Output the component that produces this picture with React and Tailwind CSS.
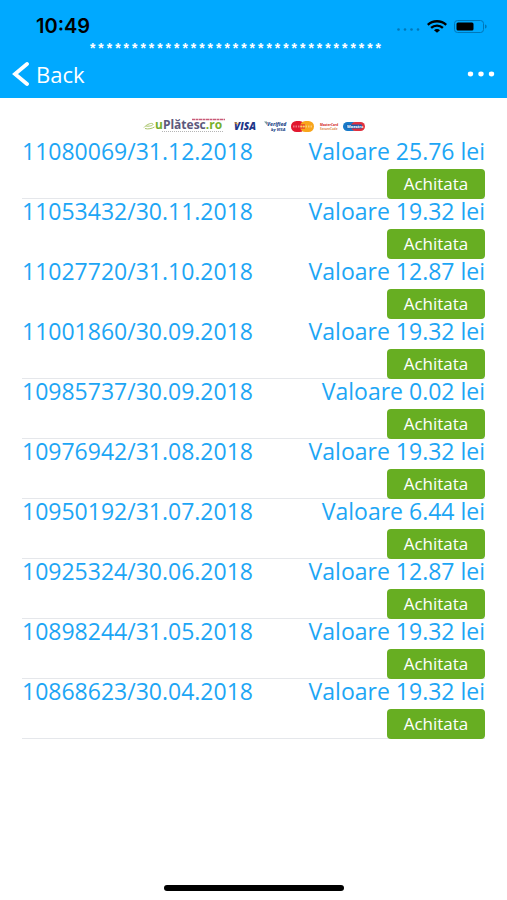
import { useState } from "react";

const INVOICES = [
  { number: "11080069", date: "31.12.2018", value: "25.76", line: true },
  { number: "11053432", date: "30.11.2018", value: "19.32", line: false },
  { number: "11027720", date: "31.10.2018", value: "12.87", line: false },
  { number: "11001860", date: "30.09.2018", value: "19.32", line: true },
  { number: "10985737", date: "30.09.2018", value: "0.02", line: true },
  { number: "10976942", date: "31.08.2018", value: "19.32", line: true },
  { number: "10950192", date: "31.07.2018", value: "6.44", line: true },
  { number: "10925324", date: "30.06.2018", value: "12.87", line: true },
  { number: "10898244", date: "31.05.2018", value: "19.32", line: true },
  { number: "10868623", date: "30.04.2018", value: "19.32", line: true },
];

function StatusBar() {
  return (
    <div className="flex h-10 items-end justify-between pr-5 pl-9 text-black">
      <span className="font-['Inter',sans-serif] text-xl leading-7 font-semibold">10:49</span>
      <div className="flex h-7 items-center gap-[7px]">
        <svg width="23" height="12" viewBox="0 0 23 12" fill="#0077b8">
          <circle cx="1.5" cy="9.5" r="1.3" />
          <circle cx="8" cy="9.5" r="1.3" />
          <circle cx="14.5" cy="9.5" r="1.3" />
          <circle cx="21" cy="9.5" r="1.3" />
        </svg>
        <svg width="20" height="13" viewBox="0 0 20 13" fill="none" stroke="#000" strokeWidth="2.4">
          <path d="M0.8 4.8C5.8 0.1 14.2 0.1 19.2 4.8" />
          <path d="M4.1 7.9C7.4 4.9 12.6 4.9 15.9 7.9" />
          <path d="M7 10.2C8.6 8.7 11.4 8.7 13 10.2L10 12.8Z" fill="#000" stroke="none" />
        </svg>
        <svg width="33" height="13" viewBox="0 0 33 13">
          <rect x="0.5" y="0.5" width="29" height="12" rx="3" fill="none" stroke="#0077b8" />
          <rect x="2.5" y="2.5" width="17" height="8" rx="1.5" fill="#000" />
          <path d="M31 4.5C33.2 5 33.2 8 31 8.5Z" fill="#0077b8" />
        </svg>
      </div>
    </div>
  );
}

function PaymentLogos() {
  return (
    <div className="flex h-[41px] items-end justify-center pb-1">
      <svg className="h-5 w-56" viewBox="0 0 224 20" fontFamily="'Open Sans', sans-serif">
        {/* uPlatesc */}
        <path
          d="M2 12.5C5 9 10 7.5 11 9C11.5 11 6 11.5 4 11M3 13.5C6 14.5 10 13.5 12.5 12"
          fill="none"
          stroke="#a9c46a"
          strokeWidth="1"
        />
        <text x="13" y="14" fontSize="12" fontWeight="700" fill="#77af2a">
          u<tspan fill="#5d587c">Plătesc</tspan>.ro
        </text>
        <path d="M50 4.5H83" stroke="#c95b78" strokeWidth="1.5" strokeDasharray="3 0.5" />
        <path d="M20 16.5H82" stroke="#b5b5b5" strokeDasharray="1 1" />

        {/* visa */}
        <text x="92" y="15" fontSize="10" fontWeight="800" fontStyle="italic" fill="#1e3687">VISA</text>
        <path d="M92 7.5H95L96 10Z" fill="#f0a321" />

        {/* verified by visa */}
        <text x="125" y="11" fontSize="5" fontWeight="800" fontStyle="italic" fill="#31508f">Verified</text>
        <text x="129" y="16" fontSize="4" fontWeight="800" fontStyle="italic" fill="#31508f">by VISA</text>
        <path d="M122 6.5H125L125 10Z" fill="#7f9c9c" />

        {/* mastercard */}
        <rect x="149" y="6" width="14" height="11" rx="5.5" fill="#e2182f" />
        <rect x="158" y="6" width="14" height="11" rx="5.5" fill="#f8a51b" />
        <path d="M158 10H163M158 13H163" stroke="#e2182f" />
        <path d="M151 11.5H170" stroke="#fff" strokeWidth="2" strokeDasharray="1.5 1" opacity="0.4" />

        {/* secure code */}
        <text x="178" y="11" fontSize="3" fontWeight="800" fill="#d7443c">MasterCard</text>
        <text x="178" y="15" fontSize="3" fontWeight="700" fill="#dd8a4c">SecureCode</text>

        {/* maestro */}
        <rect x="201" y="7" width="14" height="9" rx="4.5" fill="#1679c8" />
        <rect x="209" y="7" width="14" height="9" rx="4.5" fill="#e0303e" />
        <rect x="204" y="9.5" width="16" height="4" rx="1" fill="#1f5fae" />
        <text x="205" y="13" fontSize="4" fontWeight="700" fill="#fff">Maestro</text>
      </svg>
    </div>
  );
}

function InvoiceRow({ invoice, onOpen }) {
  return (
    <li
      className={`flex h-15 items-start justify-between border-b ${invoice.line ? "border-gray-200" : "border-transparent"}`}
    >
      <span className="text-[23px] leading-6">
        {invoice.number}/{invoice.date}
      </span>
      <div className="flex flex-col items-end gap-[6px]">
        <span className="text-[23px] leading-6">Valoare {invoice.value} lei</span>
        <button
          onClick={() => onOpen(invoice.number)}
          className="h-[30px] w-[98px] rounded bg-[#67ae22] text-[17px] leading-7 text-white"
        >
          Achitata
        </button>
      </div>
    </li>
  );
}

export default function App() {
  const [, setSelected] = useState(null);

  return (
    <div className="flex min-h-screen flex-col bg-white font-['Open_Sans',sans-serif]">
      <header className="h-[98px] bg-[#00a9ff] text-white">
        <StatusBar />
        <p className="h-3 pr-9 text-center font-['Liberation_Mono',monospace] text-sm leading-5 font-bold">
          {"*".repeat(35)}
        </p>
        <div className="flex h-11 items-center justify-between px-3">
          <button className="flex items-center gap-[7px] text-[22px] leading-7">
            <svg width="17" height="24" viewBox="0 0 17 24" fill="none" stroke="currentColor" strokeWidth="3.8">
              <path d="M15 2L3 12L15 22" strokeLinecap="round" />
            </svg>
            Back
          </button>
          <button aria-label="Menu">
            <svg width="28" height="6" viewBox="0 0 28 6" fill="currentColor">
              <ellipse cx="3.5" cy="3" rx="2.7" ry="2.4" />
              <ellipse cx="14" cy="3" rx="2.7" ry="2.4" />
              <ellipse cx="24.5" cy="3" rx="2.7" ry="2.4" />
            </svg>
          </button>
        </div>
      </header>

      <main className="flex-1 px-[22px] text-[#1da6f5]">
        <PaymentLogos />
        <ul>
          {INVOICES.map((invoice) => (
            <InvoiceRow key={invoice.number} invoice={invoice} onOpen={setSelected} />
          ))}
        </ul>
      </main>

      <footer className="flex justify-center pb-[9px]">
        <div className="h-[6px] w-[180px] rounded-full bg-black" />
      </footer>
    </div>
  );
}
